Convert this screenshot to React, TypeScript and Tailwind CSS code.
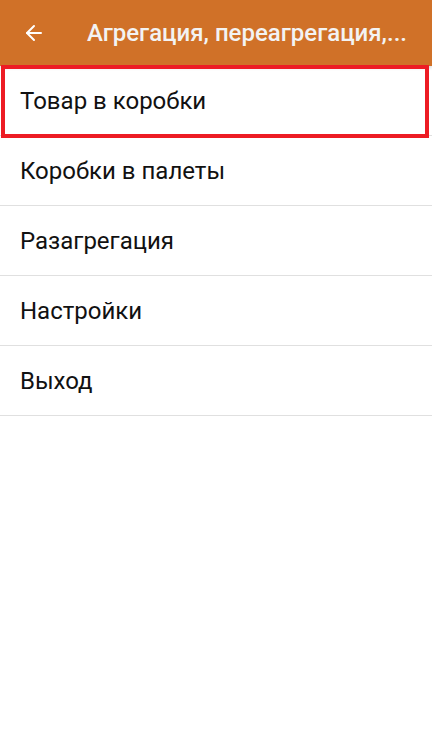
import { ArrowLeft } from 'lucide-react';

const items = ['Товар в коробки', 'Коробки в палеты', 'Разагрегация', 'Настройки', 'Выход'];

export default function App() {
  return (
    <div className="w-[432px] h-[739px] bg-white font-['Roboto',sans-serif] overflow-hidden">
      <header className="h-[66px] bg-[#d07128] flex items-center shadow-[0_2px_3px_rgba(0,0,0,0.15)] relative z-10">
        <ArrowLeft className="w-[24px] h-[24px] text-white ml-[22px] shrink-0" strokeWidth={2} />
        <h1 className="ml-[41px] text-[24px] font-medium text-[#f3f3f3] whitespace-nowrap">
          Агрегация, переагрегация,...
        </h1>
      </header>

      <ul>
        {items.map((item, i) => (
          <li key={i} className="h-[70px] border-b border-[#e0e0e0] relative flex items-center">
            {i === 0 && (
              <div className="absolute z-20 left-[1px] right-[3px] top-[-1px] bottom-[-3px] border-[4px] border-[#ed1c24]" />
            )}
            <span className="pl-[20px] text-[24px] text-[#111]">{item}</span>
          </li>
        ))}
      </ul>
    </div>
  );
}
